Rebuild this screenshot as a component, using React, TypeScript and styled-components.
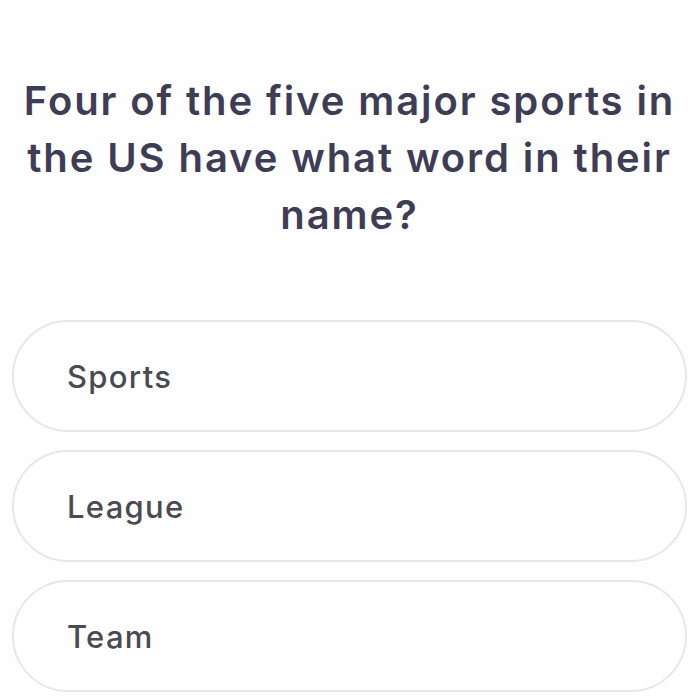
import React from "react";
import styled, { createGlobalStyle } from "styled-components";

const GlobalStyle = createGlobalStyle`
  html, body {
    margin: 0;
    padding: 0;
    background: #fefefe;
  }
  * {
    box-sizing: border-box;
  }
`;

const Screen = styled.div`
  width: 700px;
  height: 700px;
  overflow: hidden;
  display: flex;
  flex-direction: column;
  padding: 72px 13px 0 12px;
  font-family: Inter, "Noto Sans", sans-serif;
`;

const Question = styled.h1`
  margin: 0 0 77px;
  padding: 0;
  text-align: center;
  font-size: 40px;
  line-height: 57px;
  font-weight: 600;
  color: #3e3d55;
  letter-spacing: 1.9px;
`;

const Answers = styled.div`
  display: flex;
  flex-direction: column;
  gap: 18px;
`;

const Answer = styled.button`
  display: flex;
  align-items: center;
  height: 112px;
  padding: 0 0 0 53px;
  border: 2px solid #e7e7ea;
  border-radius: 56px;
  background: #ffffff;
  font-family: inherit;
  font-size: 31px;
  font-weight: 500;
  color: #4a4a52;
  letter-spacing: 1.3px;
  cursor: pointer;
  text-align: left;
`;

const answers = ["Sports", "League", "Team"];

export default function App() {
  return (
    <>
      <GlobalStyle />
      <Screen>
        <Question>
          Four of the five major sports in the US have what word in their name?
        </Question>
        <Answers>
          {answers.map((a) => (
            <Answer key={a}>{a}</Answer>
          ))}
        </Answers>
      </Screen>
    </>
  );
}
